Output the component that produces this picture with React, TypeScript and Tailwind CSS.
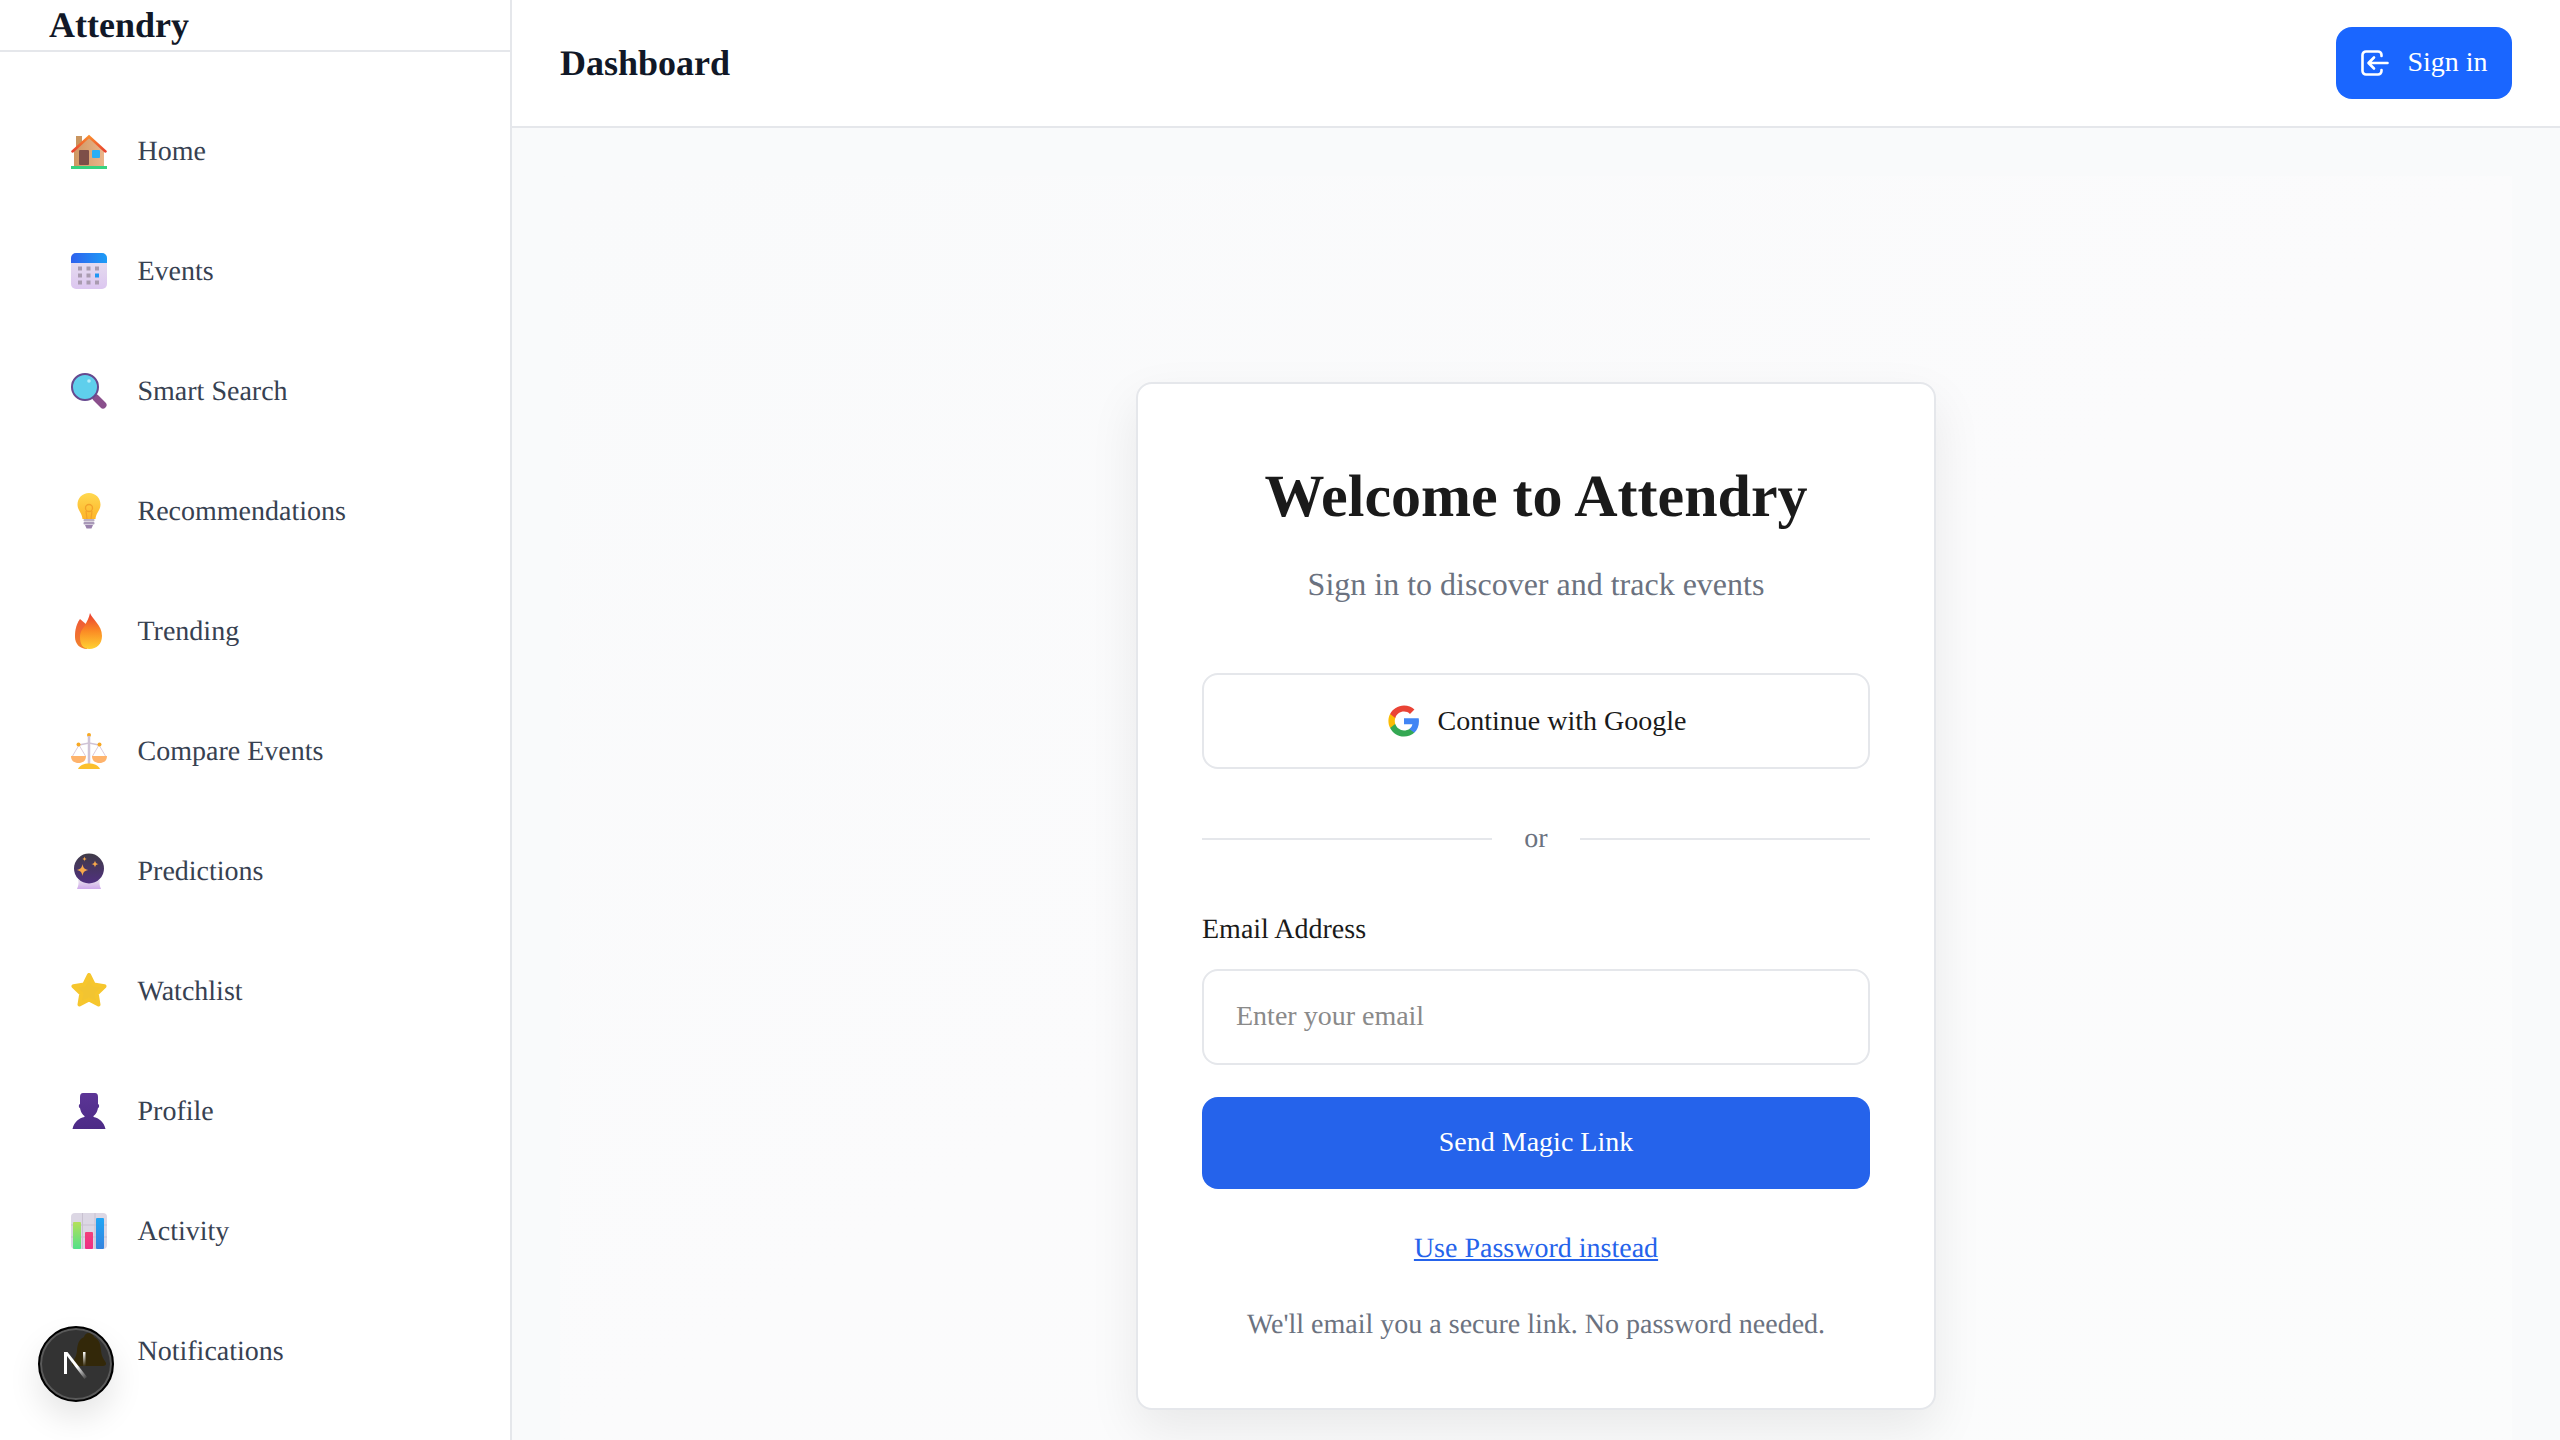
import type { ReactNode } from "react";

// nav emoji, drawn on a 36 box
function HomeIcon() {
  return (
    <svg width="36" height="36" viewBox="0 0 36 36">
      <defs>
        <linearGradient id="roof" x1="0" y1="0" x2="0" y2="1">
          <stop offset="0" stopColor="#f98a2e" />
          <stop offset="1" stopColor="#e8412f" />
        </linearGradient>
        <linearGradient id="wall" x1="0" y1="0" x2="1" y2="0">
          <stop offset="0" stopColor="#cf9763" />
          <stop offset="1" stopColor="#eab489" />
        </linearGradient>
      </defs>
      <rect x="5" y="3" width="6" height="12" fill="#c9955f" />
      <path d="M3 18 18 4 33 18V33H3Z" fill="url(#wall)" />
      <path d="M1.500 18.500 18 3.500 34.500 18.500" fill="none" stroke="url(#roof)" strokeWidth="2.500" strokeLinecap="round" />
      <rect x="8" y="17" width="10" height="15" rx="1" fill="#7d4f48" />
      <rect x="21" y="17" width="8" height="8" rx="1" fill="#29aef5" />
      <rect x="0" y="33" width="36" height="3" fill="#37d27f" />
    </svg>
  );
}

function CalendarIcon() {
  const cells = [0, 1, 2].flatMap((r) => [0, 1, 2].map((c) => ({ r, c })));
  return (
    <svg width="36" height="36" viewBox="0 0 36 36">
      <defs>
        <linearGradient id="calTop" x1="0" y1="0" x2="1" y2="0">
          <stop offset="0" stopColor="#2f62ee" />
          <stop offset="1" stopColor="#1d9cf6" />
        </linearGradient>
        <linearGradient id="calBody" x1="0" y1="0" x2="0" y2="1">
          <stop offset="0" stopColor="#e8e3ee" />
          <stop offset="1" stopColor="#dcc6f0" />
        </linearGradient>
      </defs>
      <rect x="0" y="0" width="36" height="36" rx="5" fill="url(#calBody)" />
      <path d="M0 10V5a5 5 0 0 1 5-5h26a5 5 0 0 1 5 5v5Z" fill="url(#calTop)" />
      {cells.map(({ r, c }) => (
        <rect key={`${r}-${c}`} x={7 + c * 8.5} y={13.5 + r * 7} width="4" height="4" fill={r === 1 && c === 2 ? "#2196f3" : "#a99bb0"} />
      ))}
    </svg>
  );
}

function SearchIcon() {
  return (
    <svg width="36" height="36" viewBox="0 0 36 36">
      <path d="M25 25 32 32" stroke="#8a4f8c" strokeWidth="7" strokeLinecap="round" />
      <circle cx="14" cy="14" r="13" fill="#5fcfec" stroke="#66498f" strokeWidth="2" />
      <circle cx="18" cy="8" r="1.800" fill="#b6eefa" />
    </svg>
  );
}

function BulbIcon() {
  return (
    <svg width="36" height="36" viewBox="0 0 36 36">
      <defs>
        <linearGradient id="bulb" x1="0" y1="0" x2="0" y2="1">
          <stop offset="0" stopColor="#ffd84f" />
          <stop offset="1" stopColor="#fdb52a" />
        </linearGradient>
      </defs>
      <path d="M18 0C11.500 0 6.500 5 6.500 11.500c0 6 4.500 8 5 14.500h13c.5-6.500 5-8.500 5-14.500C29.500 5 24.500 0 18 0Z" fill="url(#bulb)" />
      <circle cx="18" cy="15" r="3.500" fill="none" stroke="#f2a12a" strokeWidth="1.300" />
      <path d="M15 18 16 26M21 18 20 26" stroke="#f2a12a" strokeWidth="1.200" />
      <rect x="12.500" y="26" width="11" height="2.500" rx="1" fill="#b9aec2" />
      <rect x="12.500" y="29" width="11" height="2.500" rx="1" fill="#a999b8" />
      <path d="M14 32h8l-1.500 3.500h-5Z" fill="#9a82ac" />
    </svg>
  );
}

function FireIcon() {
  return (
    <svg width="36" height="36" viewBox="0 0 36 36">
      <defs>
        <linearGradient id="fireBack" x1="0" y1="0" x2="0" y2="1">
          <stop offset="0" stopColor="#ef5a36" />
          <stop offset="1" stopColor="#f2842c" />
        </linearGradient>
        <linearGradient id="fireFront" x1="0" y1="0" x2="0" y2="1">
          <stop offset="0" stopColor="#ea3b32" />
          <stop offset="0.5" stopColor="#fb8b24" />
          <stop offset="1" stopColor="#ffd233" />
        </linearGradient>
      </defs>
      <path d="M9 6C4 13 4 20 4 24c0 7 5 12 12 12V12Z" fill="url(#fireBack)" />
      <path d="M19 0c2 6 12 12 12 23 0 8-5.500 13-12.500 13S9 31 9 24c0-6 3-8 5-12 2-4 4-7 5-12Z" fill="url(#fireFront)" />
    </svg>
  );
}

function ScaleIcon() {
  return (
    <svg width="36" height="36" viewBox="0 0 36 36">
      <circle cx="18" cy="2" r="2" fill="#f7a823" />
      <path d="M18 3V31" stroke="#cfc3d6" strokeWidth="2.500" />
      <path d="M8 12 18 10 28 12" stroke="#cfc3d6" strokeWidth="1.500" fill="none" />
      <path d="M8 12 1.500 23M8 12 14.500 23M28 12 21.500 23M28 12 34.500 23" stroke="#dccbdc" strokeWidth="1" fill="none" />
      <circle cx="7.500" cy="11.500" r="2" fill="#f7a823" />
      <circle cx="28.500" cy="11.500" r="2" fill="#f7a823" />
      <path d="M0 23H15C15 28 11.500 30 7.500 30S0 28 0 23Z" fill="#feb36c" />
      <path d="M21 23H36C36 28 32.500 30 28.500 30S21 28 21 23Z" fill="#feb36c" />
      <path d="M7 36C9 32 13 30.500 18 30.500S27 32 29 36Z" fill="#fbc02d" />
    </svg>
  );
}

function BallIcon() {
  const sparkle = "M0-6C.8-1.800 1.800-.8 6 0 1.800.8.8 1.800 0 6-.8 1.800-1.800.8-6 0-1.800-.8-.8-1.800 0-6Z";
  return (
    <svg width="36" height="36" viewBox="0 0 36 36">
      <defs>
        <linearGradient id="ball" x1="0" y1="0" x2="0" y2="1">
          <stop offset="0" stopColor="#3f3b47" />
          <stop offset="1" stopColor="#50307f" />
        </linearGradient>
        <linearGradient id="ballBase" x1="0" y1="0" x2="0" y2="1">
          <stop offset="0" stopColor="#e8e2ec" />
          <stop offset="1" stopColor="#cfa9ec" />
        </linearGradient>
      </defs>
      <path d="M7 27C8 29 7.500 33 6 36H30C28.500 33 28 29 29 27Z" fill="url(#ballBase)" />
      <circle cx="18" cy="15.500" r="15" fill="url(#ball)" />
      <path d={sparkle} transform="translate(11.500 17)" fill="#f7a84a" />
      <path d={sparkle} transform="translate(24 11) scale(.6)" fill="#f7a84a" />
      <path d={sparkle} transform="translate(13.500 6) scale(.4)" fill="#f7a84a" />
    </svg>
  );
}

function StarIcon() {
  return (
    <svg width="36" height="36" viewBox="0 0 36 36">
      <path
        d="M18 2 22.800 11.600 33.500 13.200 25.700 20.700 27.500 31.500 18 26.500 8.500 31.500 10.300 20.700 2.500 13.200 13.200 11.600Z"
        fill="#f2c431"
        stroke="#f6c62d"
        strokeWidth="4"
        strokeLinejoin="round"
      />
    </svg>
  );
}

function ProfileIcon() {
  return (
    <svg width="36" height="36" viewBox="0 0 36 36">
      <defs>
        <linearGradient id="person" x1="0" y1="0" x2="0" y2="1">
          <stop offset="0" stopColor="#5c3596" />
          <stop offset="1" stopColor="#4c2a86" />
        </linearGradient>
      </defs>
      <path
        d="M12 0H24C26 0 27 1.500 27 4V11C28.500 11 28.500 15 27 15 26 20 24 22 22.500 23V24C28 25 33 29 34.500 36H1.500C3 29 8 25 13.500 24V23C12 22 10 20 9 15 7.500 15 7.500 11 9 11V4C9 1.500 10 0 12 0Z"
        fill="url(#person)"
      />
    </svg>
  );
}

function ChartIcon() {
  return (
    <svg width="36" height="36" viewBox="0 0 36 36">
      <defs>
        <linearGradient id="barGreen" x1="0" y1="0" x2="0" y2="1">
          <stop offset="0" stopColor="#b4e05a" />
          <stop offset="1" stopColor="#52e08a" />
        </linearGradient>
        <linearGradient id="barPink" x1="0" y1="0" x2="0" y2="1">
          <stop offset="0" stopColor="#f2407a" />
          <stop offset="1" stopColor="#ee2f86" />
        </linearGradient>
        <linearGradient id="barBlue" x1="0" y1="0" x2="0" y2="1">
          <stop offset="0" stopColor="#20a6f5" />
          <stop offset="1" stopColor="#3582de" />
        </linearGradient>
      </defs>
      <rect width="36" height="36" rx="4" fill="#dcd7e4" />
      <path d="M11.500 0V36M24 0V36M0 12H36M0 24H36" stroke="#c8c1d0" strokeWidth="1" />
      <rect x="2" y="9" width="8" height="27" rx="1" fill="url(#barGreen)" />
      <rect x="14" y="19" width="8" height="17" rx="1" fill="url(#barPink)" />
      <rect x="25" y="5" width="8" height="31" rx="1" fill="url(#barBlue)" />
    </svg>
  );
}

function BellIcon() {
  return (
    <svg width="36" height="36" viewBox="0 0 36 36">
      <path d="M18 0C21 0 22.500 2 23 4 28 6 29.500 11 30 17 30.500 24 33 26 35 30 35.500 32 34 33 32 33H4C2 33 .5 32 1 30 3 26 5.500 24 6 17 6.500 11 8 6 13 4 13.500 2 15 0 18 0Z" fill="#fdc72e" />
    </svg>
  );
}

function NextBadge() {
  return (
    <div className="absolute left-[38px] top-[1326px] w-[76px] h-[76px] rounded-full bg-black/80 border-2 border-black ring-2 ring-inset ring-[#5a5a5a] shadow-[0_16px_32px_rgba(0,0,0,0.1)] flex items-center justify-center">
      <svg width="32" height="32" viewBox="0 0 32 32">
        <defs>
          <linearGradient id="nDiag" x1="0" y1="0" x2="1" y2="1">
            <stop offset="0.55" stopColor="#fff" />
            <stop offset="1" stopColor="#fff" stopOpacity="0" />
          </linearGradient>
          <linearGradient id="nStem" x1="0" y1="0" x2="0" y2="1">
            <stop offset="0" stopColor="#fff" />
            <stop offset="0.8" stopColor="#fff" stopOpacity="0" />
          </linearGradient>
        </defs>
        <rect x="4" y="4" width="3" height="22" fill="#fff" />
        <path d="M4 4H7.500L27 29 24.500 31Z" fill="url(#nDiag)" />
        <rect x="23" y="4" width="2.500" height="18" fill="url(#nStem)" />
      </svg>
    </div>
  );
}

function GoogleIcon() {
  return (
    <svg width="34" height="34" viewBox="0 0 24 24">
      <path d="M22.560 12.250c0-.78-.07-1.530-.2-2.250H12v4.260h5.920c-.26 1.370-1.040 2.530-2.210 3.310v2.770h3.570c2.080-1.920 3.280-4.740 3.280-8.090z" fill="#4285F4" />
      <path d="M12 23c2.970 0 5.460-.98 7.280-2.660l-3.570-2.770c-.98.660-2.230 1.060-3.710 1.060-2.860 0-5.290-1.930-6.160-4.530H2.180v2.840C3.990 20.530 7.700 23 12 23z" fill="#34A853" />
      <path d="M5.840 14.090c-.22-.66-.35-1.360-.35-2.090s.13-1.430.35-2.090V7.070H2.180C1.430 8.550 1 10.220 1 12s.43 3.450 1.180 4.930l2.850-2.220.81-.62z" fill="#FBBC05" />
      <path d="M12 5.380c1.620 0 3.060.56 4.210 1.640l3.150-3.150C17.450 2.090 14.970 1 12 1 7.700 1 3.990 3.470 2.180 7.070l3.660 2.840c.87-2.600 3.300-4.530 6.160-4.530z" fill="#EA4335" />
    </svg>
  );
}

function SignInIcon() {
  return (
    <svg width="28" height="26" viewBox="0 0 28 26" fill="none" stroke="#fff" strokeWidth="2.600" strokeLinecap="round" strokeLinejoin="round">
      <path d="M20.500 6V5a3.500 3.500 0 0 0-3.500-3.500H5A3.500 3.500 0 0 0 1.500 5v16A3.500 3.500 0 0 0 5 24.500h12a3.500 3.500 0 0 0 3.500-3.500v-1" />
      <path d="M26.500 13H8M13 7.500 7.500 13l5.500 5.500" />
    </svg>
  );
}

const navItems: { label: string; icon: ReactNode }[] = [
  { label: "Home", icon: <HomeIcon /> },
  { label: "Events", icon: <CalendarIcon /> },
  { label: "Smart Search", icon: <SearchIcon /> },
  { label: "Recommendations", icon: <BulbIcon /> },
  { label: "Trending", icon: <FireIcon /> },
  { label: "Compare Events", icon: <ScaleIcon /> },
  { label: "Predictions", icon: <BallIcon /> },
  { label: "Watchlist", icon: <StarIcon /> },
  { label: "Profile", icon: <ProfileIcon /> },
  { label: "Activity", icon: <ChartIcon /> },
  { label: "Notifications", icon: <BellIcon /> },
];

export default function App() {
  return (
    <div className="relative flex h-screen overflow-hidden bg-white font-['Liberation_Serif',serif] [text-rendering:geometricPrecision]">
      {/* Sidebar */}
      <aside className="w-[512px] shrink-0 border-r-2 border-[#e5e7eb] bg-white overflow-hidden">
        <div className="h-[52px] border-b-2 border-[#e5e7eb] pl-[49px] flex items-center">
          <span className="text-[36px] leading-[48px] font-bold text-[#111827]">Attendry</span>
        </div>
        <nav className="flex flex-col pt-[39px] pl-[71px]">
          {navItems.map((item) => (
            <div key={item.label} className="h-[120px] flex items-center gap-[30.5px] shrink-0">
              {item.icon}
              <span className="mt-[2px] text-[28px] text-[#374151]">{item.label}</span>
            </div>
          ))}
        </nav>
      </aside>

      {/* Main */}
      <div className="flex-1 flex flex-col min-w-0">
        <header className="h-[128px] shrink-0 bg-white border-b-2 border-[#e5e7eb] flex items-center justify-between pl-[48px] pr-[48px]">
          <h1 className="text-[36px] font-bold text-[#111827]">Dashboard</h1>
          <button className="h-[72px] w-[176px] mb-[1px] pl-[1px] rounded-[16px] bg-[#1a66ff] text-white text-[28px] leading-[32px] flex items-center justify-center gap-[18px]">
            <SignInIcon />
            <span className="mb-[2px]">Sign in</span>
          </button>
        </header>
        <main className="flex-1 min-h-0 bg-[#f9fafb] flex flex-col px-[48px] pt-[48px]">
          <div className="flex-1 flex justify-center pt-[206px] bg-gradient-to-br from-[#f9fafb] via-[#fbfbfc] to-[#fbfcfc]">
            <div className="w-[800px] h-[1028px] shrink-0 bg-white border-2 border-[#e5e7eb] rounded-[16px] shadow-[0_20px_50px_rgba(0,0,0,0.08)] px-[64px] pt-[76px]">
              <h2 className="text-[60px] leading-[72px] font-bold text-[#1a1a1a] text-center">Welcome to Attendry</h2>
              <p className="mt-[32px] text-[32px] leading-[40px] text-[#6b7280] text-center">Sign in to discover and track events</p>
              <button className="mt-[69px] w-full h-[96px] pl-[1px] bg-white border-2 border-[#e5e7eb] rounded-[16px] flex items-center justify-center gap-[17px] text-[28px] text-[#1a1a1a]">
                <GoogleIcon />
                <span className="mb-[1px]">Continue with Google</span>
              </button>
              <div className="mt-[54px] flex items-center gap-[32px] h-[32px]">
                <div className="flex-1 h-[2px] bg-[#e5e7eb]" />
                <span className="text-[28px] text-[#6b7280]">or</span>
                <div className="flex-1 h-[2px] bg-[#e5e7eb]" />
              </div>
              <label className="block mt-[57px] text-[28px] leading-[36px] text-[#1a1a1a]">Email Address</label>
              <input
                placeholder="Enter your email"
                className="mt-[21px] block w-full h-[96px] px-[32px] pb-[2px] bg-white border-2 border-[#e5e7eb] rounded-[16px] text-[28px] placeholder:text-[#8a8a8a] outline-none"
              />
              <button className="mt-[32px] w-full h-[92px] pb-[2px] rounded-[16px] bg-[#2563eb] text-white text-[28px]">Send Magic Link</button>
              <div className="mt-[42px] text-center text-[28px] leading-[36px]">
                <a className="text-[#2563eb] underline">Use Password instead</a>
              </div>
              <p className="mt-[40px] text-center text-[28px] leading-[36px] text-[#6b7280]">We'll email you a secure link. No password needed.</p>
            </div>
          </div>
        </main>
      </div>

      <NextBadge />
    </div>
  );
}
